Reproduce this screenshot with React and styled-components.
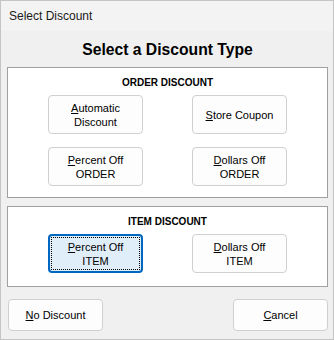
import React from "react";
import styled, { createGlobalStyle } from "styled-components";

const Global = createGlobalStyle`
  html, body { margin: 0; padding: 0; background: #f0f0f0; }
  * { box-sizing: border-box; }
`;

const Window = styled.div`
  width: 334px;
  height: 340px;
  border: 1px solid #c4c4c4;
  background: #f0f0f0;
  display: flex;
  flex-direction: column;
  font-family: "Liberation Sans", Arial, sans-serif;
  color: #000;
`;

const TitleBar = styled.div`
  height: 30px;
  background: #f3f3f3;
  display: flex;
  align-items: center;
  padding-left: 8px;
  font-size: 12px;
  color: #1a1a1a;
`;

const Body = styled.div`
  flex: 1;
  display: flex;
  flex-direction: column;
  padding: 0 5px 0 6px;
`;

const Heading = styled.div`
  height: 36px;
  display: flex;
  align-items: center;
  justify-content: center;
  font-size: 15.7px;
  font-weight: bold;
  padding-top: 2px;
`;

const Group = styled.div`
  height: ${(p) => p.$h}px;
  border: 1px solid #a0a0a0;
  background: #fff;
  display: flex;
  flex-direction: column;
  align-items: center;
  margin-bottom: ${(p) => p.$mb}px;
`;

const GroupLabel = styled.div`
  font-size: 10px;
  font-weight: bold;
  height: 27px;
  display: flex;
  align-items: center;
  padding-top: 1px;
`;

const Grid = styled.div`
  display: grid;
  grid-template-columns: 95px 95px;
  column-gap: 49px;
  row-gap: 13px;
`;

const Btn = styled.button`
  position: relative;
  width: 95px;
  height: ${(p) => p.$h || 39}px;
  border-radius: 4px;
  border: ${(p) => (p.$focus ? "2px solid #0067c0" : "1px solid #d0d0d0")};
  background: ${(p) => (p.$focus ? "#e0eef9" : "#fdfdfd")};
  font-family: "Liberation Sans", Arial, sans-serif;
  font-size: 11px;
  line-height: 14px;
  color: #000;
  padding: 0;
  display: flex;
  flex-direction: column;
  align-items: center;
  justify-content: center;
  &::after {
    content: "";
    display: ${(p) => (p.$focus ? "block" : "none")};
    position: absolute;
    inset: 1px;
    border: 1px dotted #000;
  }
`;

const Footer = styled.div`
  display: flex;
  justify-content: space-between;
  margin-top: 12px;
  padding-left: 1px;
`;

const B = ({ k, rest, line2, ...p }) => (
  <Btn {...p}>
    <span>
      <u>{k}</u>
      {rest}
    </span>
    {line2 && <span>{line2}</span>}
  </Btn>
);

export default function App() {
  return (
    <>
      <Global />
      <Window>
        <TitleBar>Select Discount</TitleBar>
        <Body>
          <Heading>Select a Discount Type</Heading>
          <Group $h={131} $mb={8}>
            <GroupLabel>ORDER DISCOUNT</GroupLabel>
            <Grid>
              <B k="A" rest="utomatic" line2="Discount" />
              <B k="S" rest="tore Coupon" />
              <B k="P" rest="ercent Off" line2="ORDER" />
              <B k="D" rest="ollars Off" line2="ORDER" />
            </Grid>
          </Group>
          <Group $h={81} $mb={0}>
            <GroupLabel>ITEM DISCOUNT</GroupLabel>
            <Grid>
              <B k="P" rest="ercent Off" line2="ITEM" $focus />
              <B k="D" rest="ollars Off" line2="ITEM" />
            </Grid>
          </Group>
          <Footer>
            <B k="N" rest="o Discount" $h={32} />
            <B k="C" rest="ancel" $h={32} />
          </Footer>
        </Body>
      </Window>
    </>
  );
}
